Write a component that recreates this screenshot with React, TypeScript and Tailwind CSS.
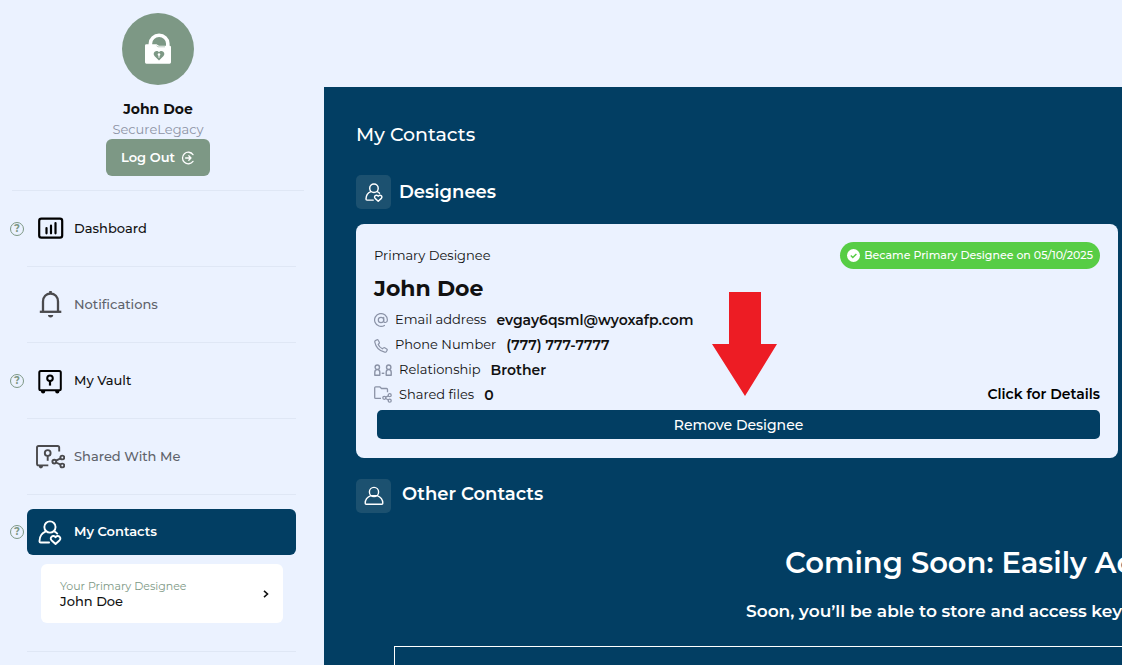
import type { ReactNode } from "react";

type IconProps = { className?: string };

function LockLogo() {
  return (
    <svg viewBox="0 0 72 72" className="size-[72px]" aria-hidden="true">
      <circle cx="36" cy="36" r="36" fill="#7d9885" />
      <path d="M28.400 32.500V30.500a8.700 8.200 0 0 1 17.400 0V33.500" fill="none" stroke="#fff" strokeWidth="3.600" />
      <path d="M23 32.600q0-1.400 1.400-1.400H34.500l2.500 1.500H47.600q1.400 0 1.400 1.400V49.300q0 1.400-1.400 1.400H24.400q-1.400 0-1.400-1.400z" fill="#fff" />
      <path d="M34.500 32.700l1.500 1.100h7" fill="none" stroke="#7d9885" strokeWidth="0.500" />
      <path d="M37 47.600l-4.300-4.400a3.200 3.200 0 0 1 0-4.400c1.300-1.300 3.300-1 4.300.5 1-1.500 3-1.800 4.300-.5a3.200 3.200 0 0 1 0 4.400z" fill="#7d9885" />
      <circle cx="37" cy="41.500" r="1.300" fill="#fff" />
      <path d="M37 42v2.800" stroke="#fff" strokeWidth="1" />
    </svg>
  );
}

function LogOutIcon() {
  return (
    <svg viewBox="0 0 14 14" className="size-[14px]" fill="none" stroke="currentColor" strokeWidth="1.300" strokeLinecap="round" strokeLinejoin="round" aria-hidden="true">
      <path d="M12 3.600A5.800 5.800 0 1 0 12 10.400" />
      <path d="M4.600 7H10M7.800 4.800L10 7 7.800 9.200" />
    </svg>
  );
}

function DashboardIcon() {
  return (
    <svg viewBox="0 0 30 30" className="size-[30px]" fill="none" stroke="currentColor" strokeWidth="2.200" aria-hidden="true">
      <rect x="4.200" y="4.700" width="23" height="19" rx="2.200" />
      <path d="M11.500 14v5.300M16 11.700v7.600M20.500 9v10.300" strokeLinecap="round" />
    </svg>
  );
}

function BellIcon() {
  return (
    <svg viewBox="0 0 30 30" className="size-[30px]" fill="none" stroke="currentColor" strokeWidth="2.300" aria-hidden="true">
      <path d="M15.500 1v2.800" strokeWidth="2.600" />
      <path d="M8 21.500V11.400c0-4.600 3.200-7.900 7.500-7.900s7.500 3.300 7.500 7.900V21.500" />
      <path d="M4.800 21.800h21.500" />
      <path d="M13 25h5.200a2.600 2.400 0 0 1-5.200 0z" fill="currentColor" stroke="none" />
    </svg>
  );
}

function VaultIcon() {
  return (
    <svg viewBox="0 0 30 30" className="size-[30px]" fill="none" stroke="currentColor" strokeWidth="2" aria-hidden="true">
      <rect x="4.300" y="5" width="21.500" height="19.300" rx="1.500" />
      <circle cx="15" cy="12.200" r="2.800" />
      <path d="M15 15v4.600" strokeWidth="2.200" />
      <path d="M6 25h4.200v.4a2.100 2.100 0 0 1-4.200 0zM20.200 25h4.200v.4a2.100 2.100 0 0 1-4.200 0z" fill="currentColor" stroke="none" />
    </svg>
  );
}

function SharedVaultIcon() {
  return (
    <svg viewBox="0 0 30 30" className="size-[30px]" fill="none" stroke="currentColor" strokeWidth="1.900" aria-hidden="true">
      <path d="M24.200 9.600V5.600q0-1.600-1.600-1.600H3.600Q2 4 2 5.600V21.800q0 1.600 1.600 1.600h9.700" />
      <circle cx="12.700" cy="11" r="2.900" />
      <path d="M12.700 14v4.800" />
      <path d="M3.800 24h4.200v.3a2.100 2.100 0 0 1-4.200 0z" fill="currentColor" stroke="none" />
      <circle cx="19.300" cy="19.600" r="1.900" />
      <circle cx="27.300" cy="15.500" r="1.900" />
      <circle cx="27.300" cy="23.500" r="1.900" />
      <path d="M21 18.700l4.600-2.300M21 20.500l4.600 2.200" />
    </svg>
  );
}

function DesigneeIcon({ className }: IconProps) {
  return (
    <svg viewBox="3 2 23.500 25" className={className} fill="none" stroke="currentColor" strokeWidth="1.900" strokeLinecap="round" strokeLinejoin="round" aria-hidden="true">
      <circle cx="14.700" cy="9" r="5.600" />
      <path d="M10.600 13.400C6.500 15 4.300 18.700 4.200 23.200q0 1.300 1.300 1.300h8.300" />
      <path d="M18.800 13.400c1.300.5 2.300 1.200 3.200 2.200" />
      <path d="M20.300 26l-4.100-3.800a2.400 2.400 0 0 1 0-3.400c1.200-1.200 3.100-1 4.100.5 1-1.500 2.900-1.700 4.100-.5a2.400 2.400 0 0 1 0 3.400z" />
    </svg>
  );
}

function PersonIcon({ className }: IconProps) {
  return (
    <svg viewBox="0 0 20 20" className={className} fill="none" stroke="currentColor" strokeWidth="1.400" strokeLinejoin="round" aria-hidden="true">
      <circle cx="10" cy="6" r="4.600" />
      <path d="M6.800 9.600C3.200 11 1.200 14 1.200 17.200q0 1 1 1h15.600q1 0 1-1c0-3.200-2-6.200-5.600-7.600z" />
    </svg>
  );
}

function AtIcon() {
  return (
    <svg viewBox="0 0 14 14" className="size-[14px]" fill="none" stroke="currentColor" strokeWidth="1.200" strokeLinecap="round" aria-hidden="true">
      <circle cx="7" cy="7" r="2.700" />
      <path d="M9.700 4.400V8c0 2.300 3.700 2 3.700-1A6.400 6.400 0 1 0 10.400 12.400" />
    </svg>
  );
}

function PhoneIcon() {
  return (
    <svg viewBox="0 0 14 14" className="mt-[2px] size-[14px]" fill="none" stroke="currentColor" strokeWidth="1.200" strokeLinejoin="round" aria-hidden="true">
      <path d="M1.400 1.600L3 .8q.8-.3 1.200.5l1.100 2q.3.700-.2 1.200l-.9 1q1.200 2.700 4.200 4.300l1.100-.9q.5-.5 1.200-.1l2 1.200q.8.500.4 1.300l-.8 1.300q-.6.800-1.600.6C5.600 12 1.700 8 .8 3.200q-.2-1 .6-1.600z" />
    </svg>
  );
}

function RelationshipIcon() {
  return (
    <svg viewBox="0 0 18 14" className="h-[14px] w-[18px]" fill="none" stroke="currentColor" strokeWidth="1.400" strokeLinejoin="round" aria-hidden="true">
      <circle cx="3.300" cy="4.200" r="2.200" />
      <path d="M.8 12.300V9.200Q.8 6.600 3.300 6.600T5.800 9.200v3.100z" />
      <circle cx="14.700" cy="4.200" r="2.200" />
      <path d="M12.200 12.300V9.200q0-2.600 2.500-2.600t2.500 2.600v3.100z" />
      <path d="M7.700 10.300h2.600" />
    </svg>
  );
}

function SharedFilesIcon() {
  return (
    <svg viewBox="0 0 18 17" className="h-[17px] w-[18px]" fill="none" stroke="currentColor" strokeWidth="1.300" strokeLinejoin="round" aria-hidden="true">
      <path d="M7 12.400H1.700q-1 0-1-1V1.800q0-1 1-1h4l1.800 1.700h5q1 0 1 1v2.800" />
      <circle cx="10.300" cy="11.800" r="1.500" />
      <circle cx="15.700" cy="9.200" r="1.500" />
      <circle cx="15.700" cy="14.700" r="1.500" />
      <path d="M11.700 11.100l2.700-1.300M11.700 12.500l2.700 1.500" />
    </svg>
  );
}

function HelpButton({ topic }: { topic: string }) {
  return (
    <button type="button" aria-label={`Help: ${topic}`} className="flex size-[14px] items-center justify-center rounded-full border border-[#7d9885] text-[10px] leading-none font-bold text-[#7d9885]">
      ?
    </button>
  );
}

function NavRow({ label, icon, help, muted }: { label: string; icon: ReactNode; help?: boolean; muted?: boolean }) {
  return (
    <li className="flex h-[76px]">
      <div className="flex w-[27px] shrink-0 items-center pl-[10px]">{help && <HelpButton topic={label} />}</div>
      <a
        href="#"
        className={`mr-7 flex flex-1 items-center gap-[9px] border-b border-[#dfe7f5] pl-2 text-[13px] font-medium ${muted ? "text-[#5f636b]" : "text-[#111111]"}`}
      >
        <span className={muted ? "text-[#4a4a4d]" : "text-black"}>{icon}</span>
        {label}
      </a>
    </li>
  );
}

function Sidebar() {
  return (
    <aside className="w-[324px] shrink-0">
      <header className="ml-3 mr-5 flex h-[191px] flex-col items-center border-b border-[#dfe7f5] pt-[13px]">
        <LockLogo />
        <p className="mt-[14px] text-sm leading-5 font-bold text-[#111111]">John Doe</p>
        <p className="text-[13px] leading-5 text-[#8d93a5]">SecureLegacy</p>
        <button type="button" className="flex h-[37px] w-[104px] items-center justify-center gap-1.5 rounded-md bg-[#7d9885] text-[13px] font-semibold whitespace-nowrap text-white">
          Log Out
          <LogOutIcon />
        </button>
      </header>
      <nav>
        <ul>
          <NavRow label="Dashboard" icon={<DashboardIcon />} help />
          <NavRow label="Notifications" icon={<BellIcon />} muted />
          <NavRow label="My Vault" icon={<VaultIcon />} help />
          <NavRow label="Shared With Me" icon={<SharedVaultIcon />} muted />
          <li className="flex pt-[14px]">
            <div className="flex h-[46px] w-[27px] shrink-0 items-center pl-[10px]">
              <HelpButton topic="My Contacts" />
            </div>
            <div className="mr-7 flex-1 border-b border-[#dfe7f5] pb-7">
              <a href="#" aria-current="page" className="flex h-[46px] items-center rounded-md bg-[#023e63] pl-[11px] text-[13px] font-semibold text-white">
                <DesigneeIcon className="mr-3 h-[25px] w-6" />
                My Contacts
              </a>
              <a href="#" className="mr-[13px] ml-[14px] mt-[9px] flex h-[59px] items-center justify-between rounded-md bg-white pr-[14px] pl-[19px]">
                <span className="flex flex-col">
                  <span className="text-[11px] leading-[15px] text-[#7d9885]">Your Primary Designee</span>
                  <span className="text-[13px] leading-[15px] font-medium text-[#111111]">John Doe</span>
                </span>
                <svg viewBox="0 0 6 8" className="h-2 w-1.5" fill="none" stroke="#111" strokeWidth="1.600" aria-hidden="true">
                  <path d="M1 .8L4.500 4 1 7.200" />
                </svg>
              </a>
            </div>
          </li>
        </ul>
      </nav>
    </aside>
  );
}

function Detail({ icon, label, value, wide }: { icon: ReactNode; label: string; value: string; wide?: boolean }) {
  return (
    <div className="flex h-[25px] items-center text-[#111111]">
      <span className={`flex shrink-0 text-[#8b93a7] ${wide ? "w-[25px]" : "w-[21px]"}`}>{icon}</span>
      <dt className="text-[13px]">{label}</dt>
      <dd className="ml-[10px] text-sm font-semibold">{value}</dd>
    </div>
  );
}

function DesigneeCard() {
  return (
    <article className="relative mr-1 rounded-lg bg-[#ebf2ff] px-[18px] pt-[18px] pb-[19px]">
      <div className="flex items-center justify-between">
        <p className="text-[13px] text-[#111111]">Primary Designee</p>
        <p className="flex h-[27px] items-center gap-1 rounded-full bg-[#57cd45] px-[7px] text-[11px] font-medium whitespace-nowrap text-white">
          <svg viewBox="0 0 13 13" className="size-[13px]" aria-hidden="true">
            <circle cx="6.500" cy="6.500" r="6.500" fill="#fff" />
            <path d="M3.800 6.600l2 1.900 3.600-3.600" fill="none" stroke="#57cd45" strokeWidth="1.400" />
          </svg>
          Became Primary Designee on 05/10/2025
        </p>
      </div>
      <h3 className="mt-[5px] mb-[3px] text-[22px] leading-[30px] font-bold text-[#111111]">John Doe</h3>
      <div className="flex items-end justify-between">
        <dl>
          <Detail icon={<AtIcon />} label="Email address" value="evgay6qsml@wyoxafp.com" />
          <Detail icon={<PhoneIcon />} label="Phone Number" value="(777) 777-7777" />
          <Detail icon={<RelationshipIcon />} label="Relationship" value="Brother" wide />
          <Detail icon={<SharedFilesIcon />} label="Shared files" value="0" wide />
        </dl>
        <a href="#" className="text-sm leading-[25px] font-semibold text-black">
          Click for Details
        </a>
      </div>
      <div className="mt-[3px] ml-[3px] flex">
        <button type="button" className="h-[29px] flex-1 rounded-[5px] bg-[#023e63] text-sm font-medium text-white">
          Remove Designee
        </button>
      </div>
      <svg viewBox="0 0 65 104" className="pointer-events-none absolute top-[68px] left-[356px] h-[104px] w-[65px]" aria-hidden="true">
        <path d="M17 0h32v52h16L33 104 0 52h17z" fill="#ed1c24" />
      </svg>
    </article>
  );
}

function IconTile({ children }: { children: ReactNode }) {
  return <span className="flex h-[34px] w-[35px] shrink-0 items-center justify-center rounded-[5px] bg-[#1c5170]">{children}</span>;
}

export default function App() {
  return (
    <div className="flex h-screen overflow-hidden bg-[#ebf2ff] font-[Montserrat,Inter,sans-serif]">
      <Sidebar />
      <main className="mt-[87px] flex min-w-0 flex-1 flex-col overflow-hidden bg-[#023e63] pt-[34px] pl-8 text-white">
        <h1 className="text-[19px] leading-7 font-medium">My Contacts</h1>
        <section className="mt-[26px]">
          <div className="mb-[15px] flex items-center gap-2">
            <IconTile>
              <DesigneeIcon className="h-[19px] w-[18px]" />
            </IconTile>
            <h2 className="text-lg leading-7 font-semibold">Designees</h2>
          </div>
          <DesigneeCard />
        </section>
        <section className="mt-[21px] flex flex-1 flex-col">
          <div className="flex gap-[11px]">
            <IconTile>
              <PersonIcon className="size-5" />
            </IconTile>
            <h2 className="text-lg leading-[30px] font-semibold">Other Contacts</h2>
          </div>
          <p className="mt-[30px] pl-[429px] text-[29px] leading-10 font-semibold whitespace-nowrap">Coming Soon: Easily Add</p>
          <p className="mt-[14px] pl-[390px] text-[17px] leading-7 font-semibold whitespace-nowrap">Soon, you’ll be able to store and access key</p>
          <div className="mt-[21px] ml-[38px] flex-1 border-t border-l border-white" />
        </section>
      </main>
    </div>
  );
}
